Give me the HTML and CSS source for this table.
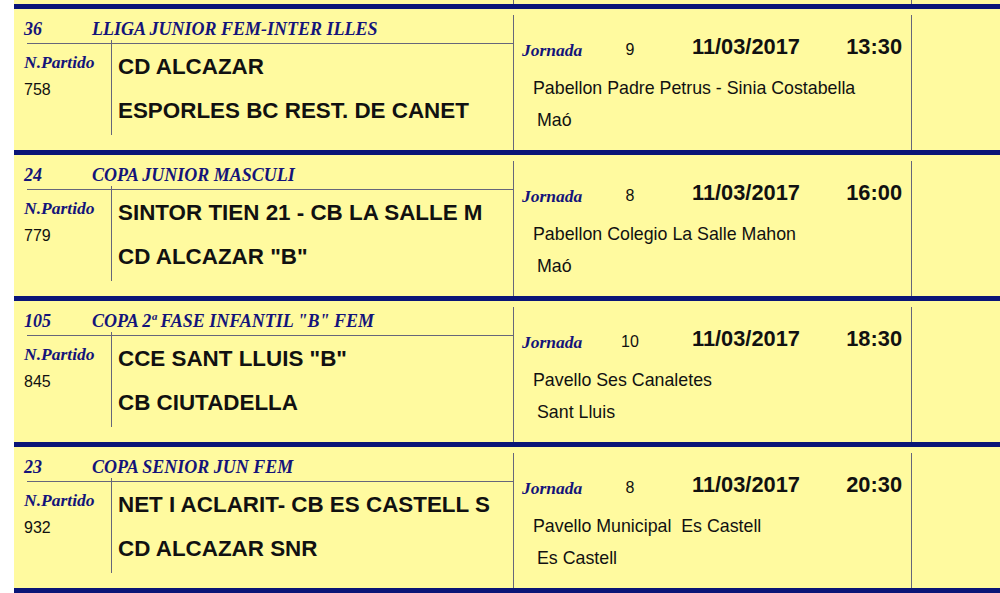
FILE: index.html
```html
<!DOCTYPE html>
<html lang="ca">
<head>
<meta charset="utf-8">
<title>Partits</title>
<link rel="stylesheet" href="styles.css">
</head>
<body>
<div class="sheet">
  <div class="tail"><div class="tail-sp"></div><div class="tail-mid"></div></div>

  <div class="card">
    <div class="left">
      <div class="head"><span class="num">36</span><span class="comp">LLIGA JUNIOR FEM-INTER ILLES</span></div>
      <div class="body">
        <div class="ids"><div class="lbl">N.Partido</div><div class="np">758</div></div>
        <div class="teams"><div class="team">CD ALCAZAR</div><div class="team second">ESPORLES BC REST. DE CANET</div></div>
      </div>
    </div>
    <div class="mid">
      <div class="top"><span class="jor">Jornada</span><span class="jn">9</span><span class="date">11/03/2017</span><span class="time">13:30</span></div>
      <div class="venue">Pabellon Padre Petrus - Sinia Costabella</div>
      <div class="city">Maó</div>
    </div>
  </div>

  <div class="card">
    <div class="left">
      <div class="head"><span class="num">24</span><span class="comp">COPA JUNIOR MASCULI</span></div>
      <div class="body">
        <div class="ids"><div class="lbl">N.Partido</div><div class="np">779</div></div>
        <div class="teams"><div class="team">SINTOR TIEN 21 - CB LA SALLE M</div><div class="team second">CD ALCAZAR "B"</div></div>
      </div>
    </div>
    <div class="mid">
      <div class="top"><span class="jor">Jornada</span><span class="jn">8</span><span class="date">11/03/2017</span><span class="time">16:00</span></div>
      <div class="venue">Pabellon Colegio La Salle Mahon</div>
      <div class="city">Maó</div>
    </div>
  </div>

  <div class="card">
    <div class="left">
      <div class="head"><span class="num">105</span><span class="comp">COPA 2ª FASE INFANTIL "B" FEM</span></div>
      <div class="body">
        <div class="ids"><div class="lbl">N.Partido</div><div class="np">845</div></div>
        <div class="teams"><div class="team">CCE SANT LLUIS "B"</div><div class="team second">CB CIUTADELLA</div></div>
      </div>
    </div>
    <div class="mid">
      <div class="top"><span class="jor">Jornada</span><span class="jn">10</span><span class="date">11/03/2017</span><span class="time">18:30</span></div>
      <div class="venue">Pavello Ses Canaletes</div>
      <div class="city">Sant Lluis</div>
    </div>
  </div>

  <div class="card">
    <div class="left">
      <div class="head"><span class="num">23</span><span class="comp">COPA SENIOR JUN FEM</span></div>
      <div class="body">
        <div class="ids"><div class="lbl">N.Partido</div><div class="np">932</div></div>
        <div class="teams"><div class="team">NET I ACLARIT- CB ES CASTELL S</div><div class="team second">CD ALCAZAR SNR</div></div>
      </div>
    </div>
    <div class="mid">
      <div class="top"><span class="jor">Jornada</span><span class="jn">8</span><span class="date">11/03/2017</span><span class="time">20:30</span></div>
      <div class="venue">Pavello Municipal&nbsp; Es Castell</div>
      <div class="city">Es Castell</div>
    </div>
  </div>

  <div class="end"></div>
</div>
</body>
</html>
```

FILE: styles.css
```css
html, body {
  margin: 0;
  padding: 0;
  background: #ffffff;
  overflow: hidden;
}

.sheet {
  margin-left: 14px;
  height: 593px;
  background: #fffa9f;
  font-family: "Liberation Sans", Arial, sans-serif;
  color: #111111;
}

.tail {
  display: flex;
  height: 4px;
}
.tail-sp { width: 499px; }
.tail-mid {
  width: 397px;
  border-left: 1px solid #66667a;
  border-right: 1px solid #66667a;
}

.card {
  display: flex;
  height: 141px;
  border-top: 5px solid #0a1577;
}

.end {
  border-top: 5px solid #0a1577;
}

.left {
  width: 499px;
  display: flex;
  flex-direction: column;
}

.head {
  box-sizing: border-box;
  height: 35px;
  margin-left: 13px;
  padding-top: 10px;
  line-height: 20px;
  border-bottom: 1px solid #66667a;
  font-family: "Liberation Serif", "Times New Roman", serif;
  font-style: italic;
  font-weight: bold;
  font-size: 18px;
  color: #14147a;
  display: flex;
  white-space: nowrap;
}
.head .num {
  margin-left: -3px;
  width: 68px;
  flex: none;
}

.body {
  display: flex;
  align-items: flex-start;
}

.ids {
  box-sizing: border-box;
  width: 98px;
  height: 95px;
  margin-top: -4px;
  padding-left: 10px;
  padding-top: 12px;
  border-right: 1px solid #66667a;
}
.lbl {
  font-family: "Liberation Serif", "Times New Roman", serif;
  font-style: italic;
  font-weight: bold;
  font-size: 17.5px;
  line-height: 20px;
  color: #14147a;
}
.np {
  margin-top: 8px;
  font-size: 16px;
  line-height: 20px;
}

.teams {
  padding-left: 6px;
  padding-top: 10px;
  white-space: nowrap;
}
.team {
  font-weight: bold;
  font-size: 22.4px;
  line-height: 26px;
}
.team.second {
  margin-top: 18px;
}

.mid {
  box-sizing: border-box;
  width: 399px;
  margin-top: 6px;
  height: 135px;
  border-left: 1px solid #66667a;
  border-right: 1px solid #66667a;
  white-space: nowrap;
}

.top {
  display: flex;
  align-items: flex-start;
  padding-top: 19px;
  padding-left: 8px;
  padding-right: 9px;
  line-height: 26px;
}
.jor {
  width: 88px;
  margin-top: 3px;
  font-family: "Liberation Serif", "Times New Roman", serif;
  font-style: italic;
  font-weight: bold;
  font-size: 17.5px;
  color: #14147a;
}
.jn {
  width: 40px;
  margin-top: 3px;
  text-align: center;
  font-size: 16px;
}
.date {
  margin-left: 42px;
  font-weight: bold;
  font-size: 21.8px;
}
.time {
  margin-left: auto;
  font-weight: bold;
  font-size: 21.8px;
}

.venue {
  margin-top: 14px;
  padding-left: 19px;
  font-size: 17.8px;
  line-height: 22px;
}
.city {
  margin-top: 10px;
  padding-left: 23px;
  font-size: 17.8px;
  line-height: 22px;
}
```
